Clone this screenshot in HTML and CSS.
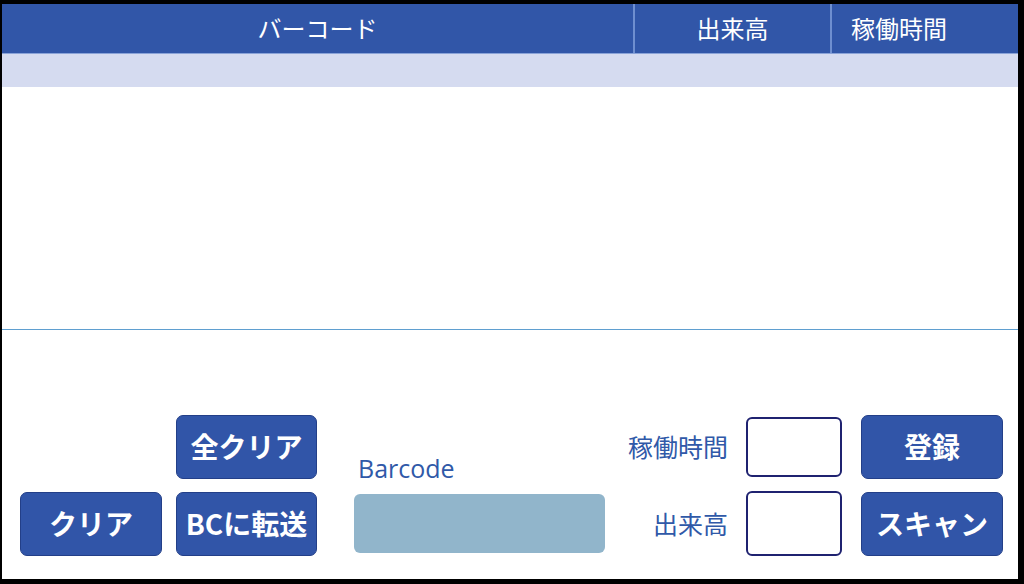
FILE: index.html
```html
<!DOCTYPE html>
<html lang="ja">
<head>
  <meta charset="UTF-8" />
  <meta name="viewport" content="width=device-width, initial-scale=1.0" />
  <title>Barcode Entry</title>
  <link rel="stylesheet" href="styles.css">
</head>
<body>
  <div class="screen">
    <div class="grid-head">
      <div class="col col-code">バーコード</div>
      <div class="col col-qty">出来高</div>
      <div class="col col-time">稼働時間</div>
    </div>
    <div class="grid-row"></div>
    <div class="grid-body"></div>

    <div class="controls">
      <div class="control-grid">
        <button class="btn btn-clear">クリア</button>
        <button class="btn btn-all">全クリア</button>
        <button class="btn btn-send">BCに転送</button>

        <div class="barcode-field">
          <label for="barcodeInput">Barcode</label>
          <input type="text" id="barcodeInput" class="barcode-input" />
        </div>

        <label class="field-label label-time" for="timeInput">稼働時間</label>
        <input type="text" id="timeInput" class="num-input input-time" />
        <button class="btn btn-save">登録</button>

        <label class="field-label label-qty" for="qtyInput">出来高</label>
        <input type="text" id="qtyInput" class="num-input input-qty" />
        <button class="btn btn-scan">スキャン</button>
      </div>
    </div>
  </div>
</body>
</html>
```

FILE: styles.css
```css
html, body {
  margin: 0;
  background: #000;
}

body {
  font-family: 'Open Sans', 'Noto Sans CJK JP', sans-serif;
  padding: 4px 6px 5px 2px;
  height: 575px;
}

.screen {
  width: 1016px;
  height: 575px;
  background: #fff;
  display: flex;
  flex-direction: column;
}

.grid-head {
  display: flex;
  height: 50px;
  background: #3156a8;
  color: #fff;
  font-family: 'Noto Sans CJK JP', sans-serif;
  font-size: 24px;
  border-bottom: 1px solid #8aa3d8;
  box-sizing: border-box;
}

.col {
  display: flex;
  align-items: center;
  justify-content: center;
  padding-bottom: 2px;
}

.col-code {
  width: 631px;
}

.col-qty {
  width: 195px;
  border-left: 2px solid #6f8fd0;
}

.col-time {
  flex: 1;
  border-left: 2px solid #6f8fd0;
  justify-content: flex-start;
  padding-left: 19px;
}

.grid-row {
  height: 33px;
  background: #d5dbf0;
}

.grid-body {
  height: 242px;
  border-bottom: 1px solid #5f9fd0;
}

.controls {
  flex: 1;
  display: flex;
  flex-direction: column;
  justify-content: flex-end;
  padding: 0 15px 23px 18px;
}

.control-grid {
  display: grid;
  grid-template-columns: 142px 141px 274px 113px 96px 147px;
  grid-template-rows: 64px 64px;
  column-gap: 14px;
  row-gap: 13px;
}

.btn {
  font-family: 'Noto Sans CJK JP', sans-serif;
  font-weight: 700;
  font-size: 28px;
  color: #fff;
  background: #3155a8;
  border: 1px solid #233f88;
  border-radius: 7px;
  padding: 0 0 3px;
  width: 142px;
  height: 64px;
}

.btn-clear { grid-column: 1; grid-row: 2; }
.btn-all { grid-column: 2; grid-row: 1; width: 141px; }
.btn-send { grid-column: 2; grid-row: 2; width: 141px; }
.btn-save { grid-column: 6; grid-row: 1; justify-self: end; }
.btn-scan { grid-column: 6; grid-row: 2; justify-self: end; }

.barcode-field {
  grid-column: 3;
  grid-row: 1 / 3;
  justify-self: end;
  width: 251px;
  display: flex;
  flex-direction: column;
  justify-content: flex-end;
  color: #3059a8;
  font-size: 25px;
}

.barcode-field label {
  padding-left: 4px;
  margin-bottom: 9px;
}

.barcode-input {
  height: 59px;
  margin-bottom: 3px;
  border: none;
  border-radius: 6px;
  background: #91b5cb;
  box-sizing: border-box;
}

.field-label {
  grid-column: 4;
  align-self: center;
  text-align: right;
  padding-right: 4px;
  color: #3059a8;
  font-family: 'Noto Sans CJK JP', sans-serif;
  font-size: 25px;
}

.label-time { grid-row: 1; margin-top: -2px; }
.label-qty { grid-row: 2; margin-top: -2px; }

.num-input {
  grid-column: 5;
  box-sizing: border-box;
  width: 96px;
  border: 2px solid #1f2270;
  border-radius: 6px;
  background: #fff;
}

.input-time {
  grid-row: 1;
  height: 60px;
  margin-top: 2px;
}

.input-qty {
  grid-row: 2;
  height: 65px;
  margin-top: -1px;
}
```
